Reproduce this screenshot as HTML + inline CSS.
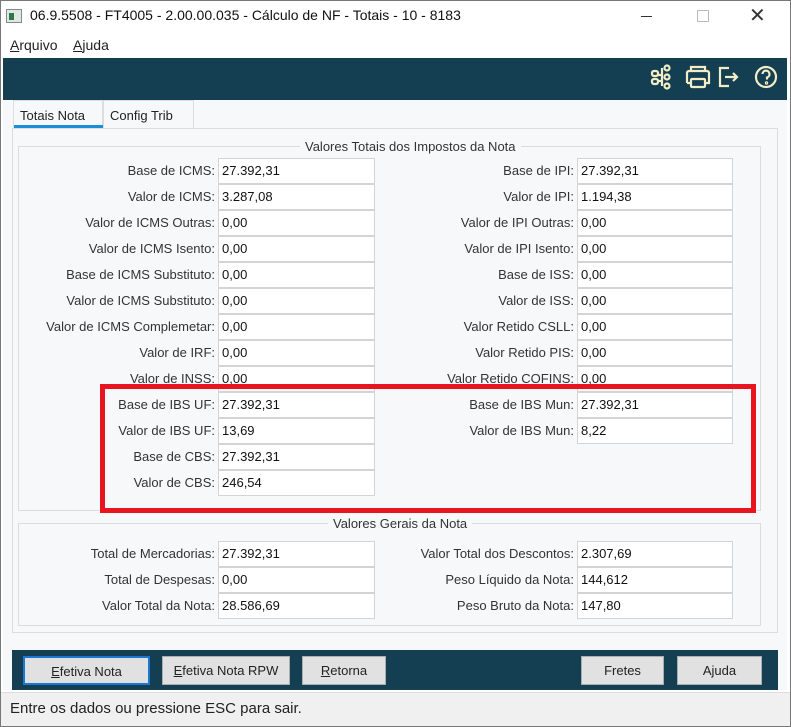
<!DOCTYPE html><html><head><meta charset="utf-8"><style>
*{margin:0;padding:0;box-sizing:border-box}
body{width:791px;height:727px;background:#f0f0f0;font-family:"Liberation Sans",sans-serif;font-size:13px;color:#222;position:relative;overflow:hidden}
.a{position:absolute}
.l{position:absolute;text-align:right;white-space:nowrap;color:#333}
.i{position:absolute;height:26px;background:#fff;border:1px solid #d4d4d4;padding:4px 0 0 3px;color:#111}
.btn{position:absolute;top:656px;height:29px;background:#e1e1e1;border:1px solid #adadad;text-align:center;line-height:27px;color:#222}
</style></head><body>
<div class="a" style="left:0;top:0;width:791px;height:727px;border:1px solid #777;background:#fff"></div>
<div class="a" style="left:6px;top:9px;width:16px;height:14px;border:1px solid #888;background:#dfe6e6"><div style="margin:3px 0 0 2px;width:5px;height:7px;background:#2c7a3f"></div></div>
<div class="a" style="left:30px;top:7px;font-size:14px;color:#111">06.9.5508 - FT4005 - 2.00.00.035 - Cálculo de NF - Totais - 10 - 8183</div>
<div class="a" style="left:641px;top:16px;width:11px;height:1px;background:#333"></div>
<div class="a" style="left:697px;top:10px;width:12px;height:12px;border:1px solid #bbb"></div>
<div class="a" style="left:749px;top:3px;font-size:20px;color:#333">✕</div>
<div class="a" style="left:10px;top:37px;font-size:14px"><u>A</u>rquivo&nbsp;&nbsp;&nbsp;&nbsp;<u>A</u>juda</div>
<div class="a" style="left:3px;top:58px;width:784px;height:42px;background:#143f52"></div>
<svg class="a" style="left:648px;top:63px" width="136" height="30" viewBox="0 0 136 30" fill="none" stroke="#f3ecc4" stroke-width="2.2">
<rect x="4" y="8" width="6" height="5" rx="2"/><rect x="4" y="16" width="6" height="5" rx="2"/><circle cx="19" cy="5" r="2.5"/><circle cx="19" cy="14" r="2.5"/><circle cx="19" cy="23" r="2.5"/><path d="M10 12h4M14 5v18M10 18h4"/>
<path d="M43 8v-4h14v4M39 20v-10a2 2 0 0 1 2-2h18a2 2 0 0 1 2 2v10h-4M43 20h-4"/><rect x="43" y="16" width="14" height="8" rx="1"/>
<path d="M81 5h-9v18h9"/><path d="M77 14h12M85 10l4 4-4 4"/>
<circle cx="118" cy="14" r="10"/><path d="M114.5 11a3.5 3.5 0 1 1 4.5 3.5v2"/><circle cx="118.5" cy="20" r="0.6"/>
</svg>
<div class="a" style="left:3px;top:100px;width:784px;height:590px;background:#f7f8fa"></div>
<div class="a" style="left:13px;top:100px;width:90px;height:28px;background:#f7f8fa;border:1px solid #ddd;border-bottom:none"></div>
<div class="a" style="left:103px;top:100px;width:91px;height:28px;background:#f7f8fa;border:1px solid #ddd;border-bottom:none"></div>
<div class="a" style="left:20px;top:108px">Totais Nota</div>
<div class="a" style="left:14px;top:125px;width:89px;height:3px;background:#1a8fd6"></div>
<div class="a" style="left:110px;top:108px">Config Trib</div>
<div class="a" style="left:12px;top:128px;width:766px;height:505px;border:1px solid #ddd"></div>
<div class="a" style="left:18px;top:146px;width:743px;height:365px;border:1px solid #dcdcdc"></div>
<div class="a" style="left:300px;top:139px;background:#f7f8fa;padding:0 5px;color:#333">Valores Totais dos Impostos da Nota</div>
<div class="a" style="left:18px;top:523px;width:743px;height:103px;border:1px solid #dcdcdc"></div>
<div class="a" style="left:328px;top:516px;background:#f7f8fa;padding:0 5px;color:#333">Valores Gerais da Nota</div>

<div class="l" style="right:576px;top:163px">Base de ICMS:</div><div class="i" style="left:218px;top:158px;width:157px">27.392,31</div>
<div class="l" style="right:576px;top:189px">Valor de ICMS:</div><div class="i" style="left:218px;top:184px;width:157px">3.287,08</div>
<div class="l" style="right:576px;top:215px">Valor de ICMS Outras:</div><div class="i" style="left:218px;top:210px;width:157px">0,00</div>
<div class="l" style="right:576px;top:241px">Valor de ICMS Isento:</div><div class="i" style="left:218px;top:236px;width:157px">0,00</div>
<div class="l" style="right:576px;top:267px">Base de ICMS Substituto:</div><div class="i" style="left:218px;top:262px;width:157px">0,00</div>
<div class="l" style="right:576px;top:293px">Valor de ICMS Substituto:</div><div class="i" style="left:218px;top:288px;width:157px">0,00</div>
<div class="l" style="right:576px;top:319px">Valor de ICMS Complemetar:</div><div class="i" style="left:218px;top:314px;width:157px">0,00</div>
<div class="l" style="right:576px;top:345px">Valor de IRF:</div><div class="i" style="left:218px;top:340px;width:157px">0,00</div>
<div class="l" style="right:576px;top:371px">Valor de INSS:</div><div class="i" style="left:218px;top:366px;width:157px">0,00</div>
<div class="l" style="right:576px;top:397px">Base de IBS UF:</div><div class="i" style="left:218px;top:392px;width:157px">27.392,31</div>
<div class="l" style="right:576px;top:423px">Valor de IBS UF:</div><div class="i" style="left:218px;top:418px;width:157px">13,69</div>
<div class="l" style="right:576px;top:449px">Base de CBS:</div><div class="i" style="left:218px;top:444px;width:157px">27.392,31</div>
<div class="l" style="right:576px;top:475px">Valor de CBS:</div><div class="i" style="left:218px;top:470px;width:157px">246,54</div>

<div class="l" style="right:217px;top:163px">Base de IPI:</div><div class="i" style="left:577px;top:158px;width:156px">27.392,31</div>
<div class="l" style="right:217px;top:189px">Valor de IPI:</div><div class="i" style="left:577px;top:184px;width:156px">1.194,38</div>
<div class="l" style="right:217px;top:215px">Valor de IPI Outras:</div><div class="i" style="left:577px;top:210px;width:156px">0,00</div>
<div class="l" style="right:217px;top:241px">Valor de IPI Isento:</div><div class="i" style="left:577px;top:236px;width:156px">0,00</div>
<div class="l" style="right:217px;top:267px">Base de ISS:</div><div class="i" style="left:577px;top:262px;width:156px">0,00</div>
<div class="l" style="right:217px;top:293px">Valor de ISS:</div><div class="i" style="left:577px;top:288px;width:156px">0,00</div>
<div class="l" style="right:217px;top:319px">Valor Retido CSLL:</div><div class="i" style="left:577px;top:314px;width:156px">0,00</div>
<div class="l" style="right:217px;top:345px">Valor Retido PIS:</div><div class="i" style="left:577px;top:340px;width:156px">0,00</div>
<div class="l" style="right:217px;top:371px">Valor Retido COFINS:</div><div class="i" style="left:577px;top:366px;width:156px">0,00</div>
<div class="l" style="right:217px;top:397px">Base de IBS Mun:</div><div class="i" style="left:577px;top:392px;width:156px">27.392,31</div>
<div class="l" style="right:217px;top:423px">Valor de IBS Mun:</div><div class="i" style="left:577px;top:418px;width:156px">8,22</div>

<div class="a" style="left:100px;top:384px;width:656px;height:129px;border:5px solid #e8141f"></div>

<div class="l" style="right:576px;top:546px">Total de Mercadorias:</div><div class="i" style="left:218px;top:541px;width:157px">27.392,31</div>
<div class="l" style="right:576px;top:572px">Total de Despesas:</div><div class="i" style="left:218px;top:567px;width:157px">0,00</div>
<div class="l" style="right:576px;top:598px">Valor Total da Nota:</div><div class="i" style="left:218px;top:593px;width:157px">28.586,69</div>
<div class="l" style="right:217px;top:546px">Valor Total dos Descontos:</div><div class="i" style="left:577px;top:541px;width:156px">2.307,69</div>
<div class="l" style="right:217px;top:572px">Peso Líquido da Nota:</div><div class="i" style="left:577px;top:567px;width:156px">144,612</div>
<div class="l" style="right:217px;top:598px">Peso Bruto da Nota:</div><div class="i" style="left:577px;top:593px;width:156px">147,80</div>

<div class="a" style="left:12px;top:650px;width:766px;height:40px;background:#143f52"></div>
<div class="btn" style="left:23px;width:127px;border:2px solid #1a78d0"><u>E</u>fetiva Nota</div>
<div class="btn" style="left:162px;width:128px"><u>E</u>fetiva Nota RPW</div>
<div class="btn" style="left:302px;width:84px"><u>R</u>etorna</div>
<div class="btn" style="left:581px;width:83px">Fretes</div>
<div class="btn" style="left:677px;width:85px">Ajuda</div>
<div class="a" style="left:1px;top:692px;width:789px;height:34px;background:#f0f0f0;border-top:1px solid #ddd"></div>
<div class="a" style="left:10px;top:700px;font-size:15px;color:#222">Entre os dados ou pressione ESC para sair.</div>
</body></html>
